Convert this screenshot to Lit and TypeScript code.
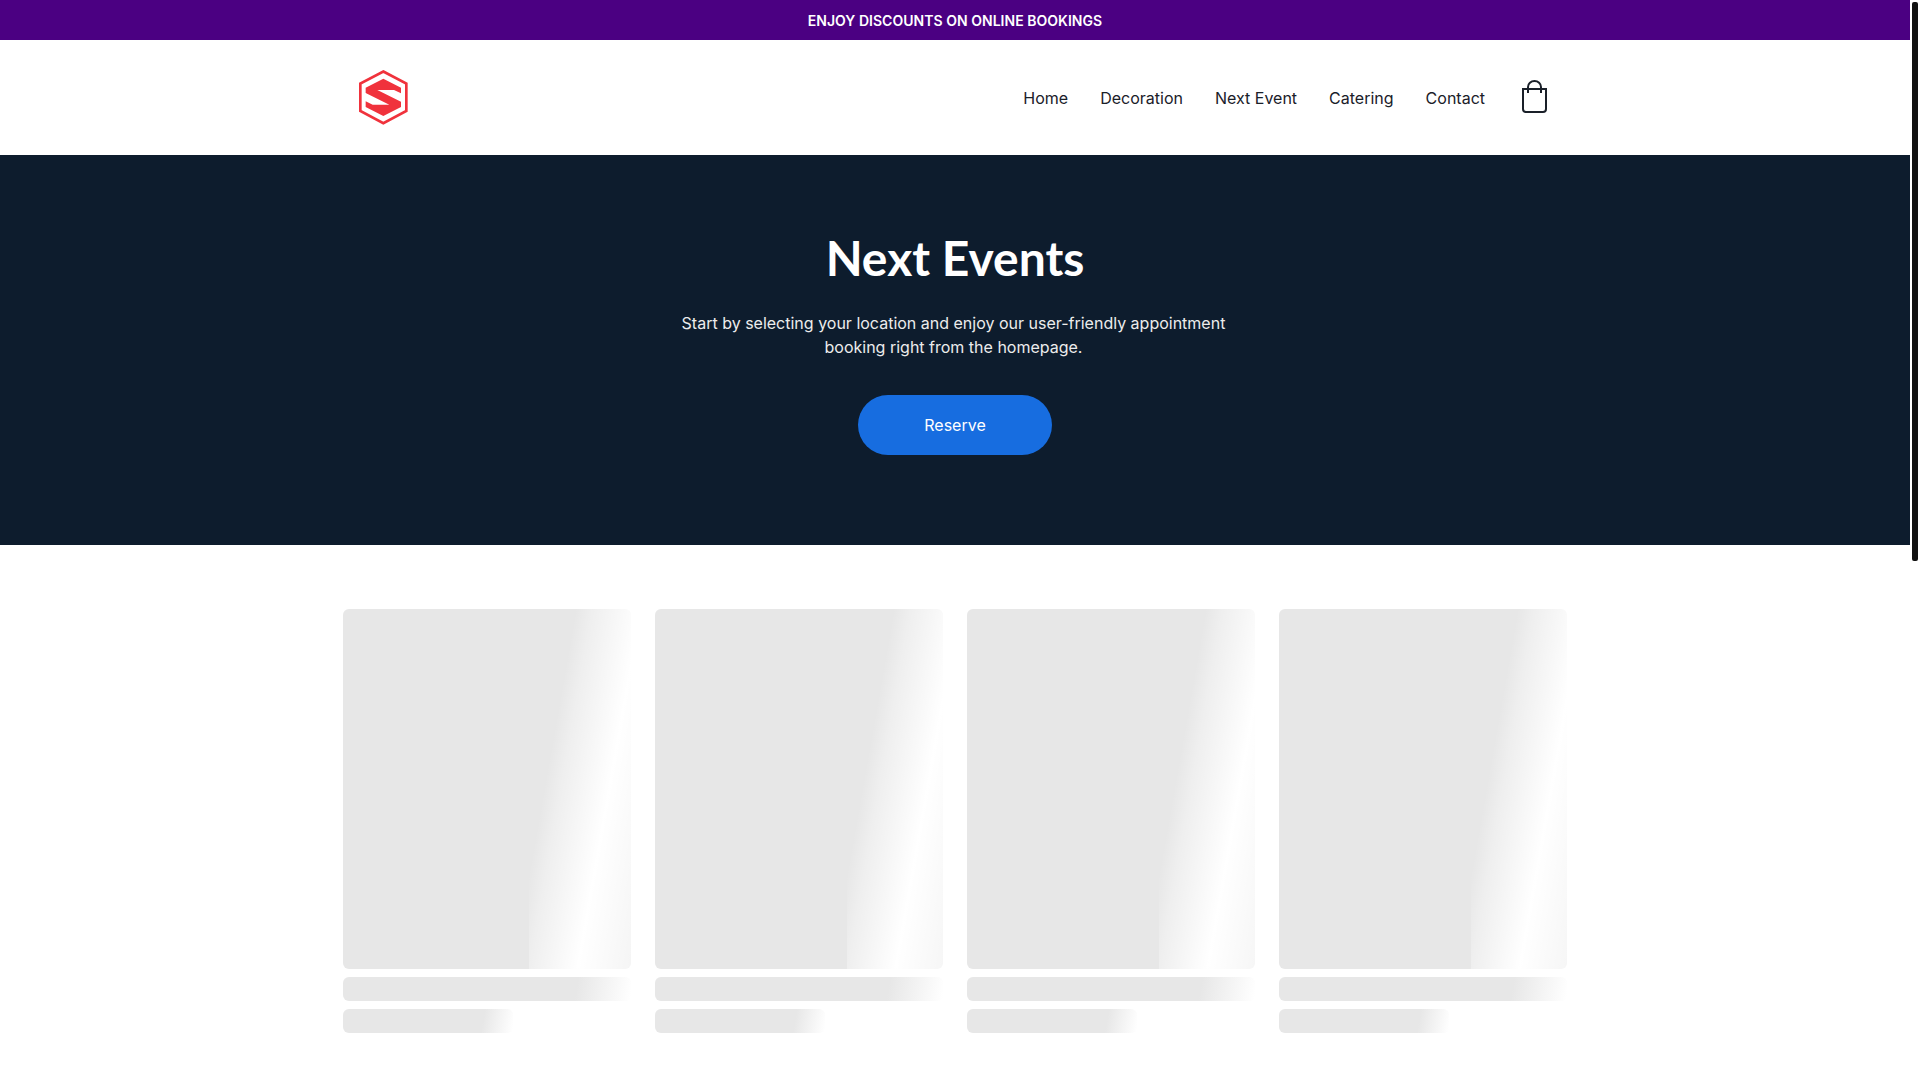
import { LitElement, html, css } from "lit";
import { customElement } from "lit/decorators.js";

const links = ["Home", "Decoration", "Next Event", "Catering", "Contact"];

@customElement("app-root")
export class AppRoot extends LitElement {
  static styles = css`
    :host {
      display: block;
      font-family: "Inter", "Liberation Sans", sans-serif;
      color: #1a2029;
    }
    .page {
      display: flex;
      height: 100vh;
      overflow: hidden;
      background: #fff;
    }
    .main {
      flex: 1;
      min-width: 0;
    }
    /* the browser hides real scrollbars in the shot, so this one is drawn */
    .rail {
      width: 6px;
      padding: 2px 2px 0;
    }
    .thumb {
      height: 559px;
      background: #111;
      border-radius: 2px;
    }
    .banner {
      height: 40px;
      display: flex;
      align-items: center;
      justify-content: center;
      background: #4b0082;
      color: #fff;
      font-size: 14px;
      font-weight: 600;
      letter-spacing: 0.03px;
    }
    .wrap {
      width: 1224px;
      margin: 0 auto;
    }
    .nav {
      height: 115px;
      display: flex;
      align-items: center;
      justify-content: space-between;
      box-sizing: border-box;
      padding: 0 20px 0 16px;
    }
    .logo {
      display: block;
      width: 49px;
      height: 55px;
    }
    .right {
      display: flex;
      align-items: center;
    }
    .links {
      display: flex;
      gap: 32px;
      font-size: 16px;
      margin-right: 37px;
    }
    .bag {
      display: block;
      width: 25px;
      height: 33px;
      margin-bottom: 2px;
    }
    .hero {
      height: 390px;
      box-sizing: border-box;
      padding-top: 73px;
      background: #0d1c2d;
      color: #fff;
      display: flex;
      flex-direction: column;
      align-items: center;
      text-align: center;
    }
    h1 {
      margin: 0;
      font-family: "Lato", sans-serif;
      font-size: 48px;
      line-height: 60px;
      font-weight: 700;
    }
    p {
      margin: 23px 0 0;
      max-width: 560px;
      padding-right: 3px;
      font-size: 16px;
      line-height: 24px;
      color: #ececec;
    }
    .btn {
      margin-top: 36px;
      width: 194px;
      height: 60px;
      border: 0;
      border-radius: 30px;
      background: #176de0;
      color: #fff;
      font: 400 16px "Inter", sans-serif;
    }
    .grid {
      display: grid;
      grid-template-columns: repeat(4, 288px);
      gap: 24px;
      padding-top: 64px;
    }
    .card {
      display: flex;
      flex-direction: column;
      gap: 8px;
    }
    .img,
    .bar {
      border-radius: 6px;
      background-color: #e7e7e7;
      background-repeat: no-repeat;
    }
    .img {
      height: 360px;
      background-image: linear-gradient(
        100deg,
        rgba(255, 255, 255, 0) 46px,
        rgba(255, 255, 255, 0.32) 62px,
        #fff 110px,
        rgba(255, 255, 255, 0.58) 163px
      );
      background-position: 192px 0;
      background-size: 96px 100%;
    }
    .card:first-child .img {
      background-position: 186px 0;
      background-size: 102px 100%;
    }
    .bar {
      height: 24px;
      background-image: linear-gradient(100deg, #e7e7e7 232px, #fff 287px);
    }
    .bar.short {
      width: 170px;
      background-image: linear-gradient(100deg, #e7e7e7 140px, #fff 171px);
    }
  `;

  render() {
    return html`
      <div class="page">
        <div class="main">
          <div class="banner">ENJOY DISCOUNTS ON ONLINE BOOKINGS</div>
          <header class="wrap nav">
            <svg class="logo" viewBox="117 210 147 165">
              <polygon
                points="190,214.500 259,251 259,333 190,369.500 121,333 121,251"
                fill="none"
                stroke="#f0323c"
                stroke-width="8"
              />
              <polygon
                fill="#f0323c"
                points="190,236 243,263 243,280 222,270 172,270 243,305 243,321 190,348 137,321 137,304 158,314 208,314 137,279 137,263"
              />
            </svg>
            <div class="right">
              <nav class="links">${links.map((l) => html`<span>${l}</span>`)}</nav>
              <svg class="bag" viewBox="0 0 25 33" fill="none" stroke="#1a2029" stroke-width="2">
                <path d="M1 9 H24 V29 a3 3 0 0 1 -3 3 H4 a3 3 0 0 1 -3 -3 Z" />
                <path d="M6 13 V7 a6.500 6 0 0 1 13 0 V13" />
              </svg>
            </div>
          </header>
          <section class="hero">
            <h1>Next Events</h1>
            <p>Start by selecting your location and enjoy our user-friendly appointment booking right from the homepage.</p>
            <button class="btn">Reserve</button>
          </section>
          <section class="wrap grid">
            ${[0, 1, 2, 3].map(
              () => html`
                <div class="card">
                  <div class="img"></div>
                  <div class="bar"></div>
                  <div class="bar short"></div>
                </div>
              `
            )}
          </section>
        </div>
        <div class="rail"><div class="thumb"></div></div>
      </div>
    `;
  }
}
